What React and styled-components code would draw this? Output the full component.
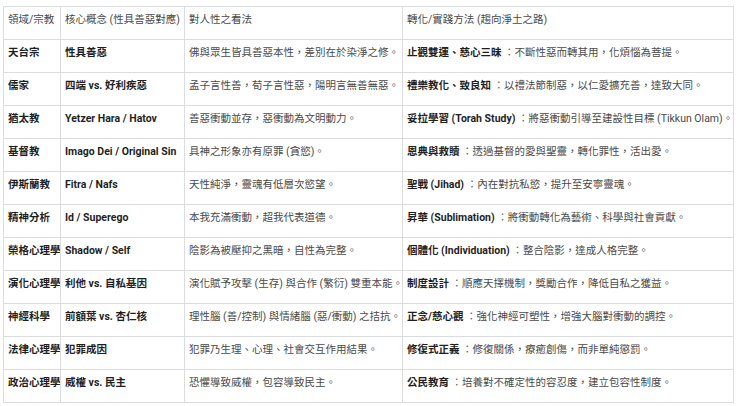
import React from "react";
import styled, { createGlobalStyle } from "styled-components";

const GlobalStyles = createGlobalStyle`
  html, body {
    margin: 0;
    padding: 0;
    background: #ffffff;
  }
  body {
    font-family: Roboto, "Noto Sans CJK TC", "Noto Sans", sans-serif;
  }
`;

const Page = styled.div`
  width: 740px;
  height: 406px;
  padding: 6px 0 0 3px;
  box-sizing: border-box;
  background: #ffffff;
`;

const Grid = styled.div`
  display: grid;
  grid-template-columns: 57px 124px 218px 331px;
  grid-auto-rows: 33px;
  border-top: 1px solid #dadce0;
  border-left: 1px solid #dadce0;
  width: 731px;
  box-sizing: border-box;
`;

const Cell = styled.div`
  box-sizing: border-box;
  border-right: 1px solid #dadce0;
  border-bottom: 1px solid #dadce0;
  padding: 6px 3px 0 4px;
  font-size: 10.5px;
  line-height: 14px;
  white-space: nowrap;
  overflow: hidden;
  color: ${(p) => (p.$bold ? "#1f1f1f" : "#4a4a4a")};
  font-weight: ${(p) => (p.$bold ? 700 : 400)};
`;

const Label = styled.b`
  font-weight: 700;
  color: #1f1f1f;
`;

const Sep = styled.span`
  color: #5f6368;
  white-space: pre;
`;

const header = ["領域/宗教", "核心概念 (性具善惡對應)", "對人性之看法", "轉化/實踐方法 (趨向淨土之路)"];

const rows = [
  ["天台宗", "性具善惡", "佛與眾生皆具善惡本性，差別在於染淨之修。", "止觀雙運、慈心三昧", "不斷性惡而轉其用，化煩惱為菩提。"],
  ["儒家", "四端 vs. 好利疾惡", "孟子言性善，荀子言性惡，陽明言無善無惡。", "禮樂教化、致良知", "以禮法節制惡，以仁愛擴充善，達致大同。"],
  ["猶太教", "Yetzer Hara / Hatov", "善惡衝動並存，惡衝動為文明動力。", "妥拉學習 (Torah Study)", "將惡衝動引導至建設性目標 (Tikkun Olam)。"],
  ["基督教", "Imago Dei / Original Sin", "具神之形象亦有原罪 (貪慾)。", "恩典與救贖", "透過基督的愛與聖靈，轉化罪性，活出愛。"],
  ["伊斯蘭教", "Fitra / Nafs", "天性純淨，靈魂有低層次慾望。", "聖戰 (Jihad)", "內在對抗私慾，提升至安寧靈魂。"],
  ["精神分析", "Id / Superego", "本我充滿衝動，超我代表道德。", "昇華 (Sublimation)", "將衝動轉化為藝術、科學與社會貢獻。"],
  ["榮格心理學", "Shadow / Self", "陰影為被壓抑之黑暗，自性為完整。", "個體化 (Individuation)", "整合陰影，達成人格完整。"],
  ["演化心理學", "利他 vs. 自私基因", "演化賦予攻擊 (生存) 與合作 (繁衍) 雙重本能。", "制度設計", "順應天擇機制，獎勵合作，降低自私之獲益。"],
  ["神經科學", "前額葉 vs. 杏仁核", "理性腦 (善/控制) 與情緒腦 (惡/衝動) 之拮抗。", "正念/慈心觀", "強化神經可塑性，增強大腦對衝動的調控。"],
  ["法律心理學", "犯罪成因", "犯罪乃生理、心理、社會交互作用結果。", "修復式正義", "修復關係，療癒創傷，而非單純懲罰。"],
  ["政治心理學", "威權 vs. 民主", "恐懼導致威權，包容導致民主。", "公民教育", "培養對不確定性的容忍度，建立包容性制度。"],
];

export default function App() {
  return (
    <Page>
      <GlobalStyles />
      <Grid>
        {header.map((h) => (
          <Cell key={h}>{h}</Cell>
        ))}
        {rows.map(([field, core, view, label, method]) => (
          <React.Fragment key={field}>
            <Cell $bold>{field}</Cell>
            <Cell $bold>{core}</Cell>
            <Cell>{view}</Cell>
            <Cell>
              <Label>{label}</Label>
              <Sep> ：</Sep>
              {method}
            </Cell>
          </React.Fragment>
        ))}
      </Grid>
    </Page>
  );
}
